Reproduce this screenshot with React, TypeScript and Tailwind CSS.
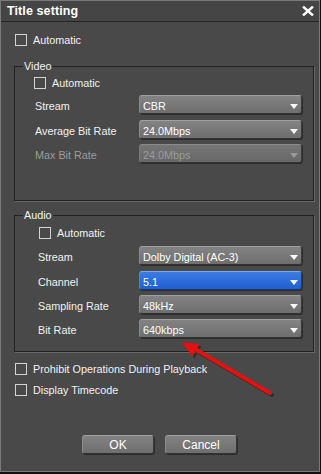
import clsx from "clsx";

type SelectProps = {
  value: string;
  variant?: "normal" | "disabled" | "active";
};

const Select = ({ value, variant = "normal" }: SelectProps) => {
  return (
    <div
      className={clsx(
        "flex h-[19px] w-[163px] items-center justify-between rounded-[3px] border pl-[3px] pr-[3px] pt-[2px] shadow-[1px_1px_0_#2c2c2c]",
        variant === "normal" &&
          "border-t-[#a0a0a0] border-l-[#8c8c8c] border-r-[#3a3a3a] border-b-[#333] bg-linear-to-b from-[#838383] to-[#6e6e6e] text-white",
        variant === "disabled" &&
          "border-t-[#8a8a8a] border-l-[#7c7c7c] border-r-[#3a3a3a] border-b-[#333] bg-linear-to-b from-[#757575] to-[#686868] text-[#9c9c9c]",
        variant === "active" &&
          "border-t-[#7ea8ec] border-l-[#4e84dc] border-r-[#1a3f7e] border-b-[#163670] bg-linear-to-b from-[#3a7ce4] to-[#1f5fcf] text-white"
      )}
    >
      <span className="leading-[14px]">{value}</span>
      <svg width="8" height="5" viewBox="0 0 8 5" className="mt-[1px]">
        <path d="M0 0H8L4 5Z" fill={variant === "disabled" ? "#999" : "#fff"} />
      </svg>
    </div>
  );
};

const Checkbox = ({ label, className }: { label: string; className?: string }) => (
  <div className={clsx("flex h-[12px] items-center", className)}>
    <div className="h-[12px] w-[12px] border border-[#d4d4d4]" />
    <span className="ml-[6px] leading-[14px] text-[#f2f2f2]">{label}</span>
  </div>
);

const Row = ({
  label,
  value,
  labelWidth,
  variant,
  className,
}: {
  label: string;
  value: string;
  labelWidth: string;
  variant?: "normal" | "disabled" | "active";
  className?: string;
}) => (
  <div className={clsx("flex items-center", className)}>
    <span
      className={clsx(
        "pt-[2px] leading-[14px]",
        labelWidth,
        variant === "disabled" ? "text-[#9c9c9c]" : "text-[#f2f2f2]"
      )}
    >
      {label}
    </span>
    <Select value={value} variant={variant} />
  </div>
);

export default function App() {
  return (
    <div className="relative h-[474px] w-[321px] bg-[#101010] font-['Liberation_Sans',Arial,sans-serif] text-[10.8px]">
      <div className="flex h-[472px] w-[320px] flex-col border border-[#7a7a7a] bg-[#494949]">
        {/* title bar */}
        <div className="flex h-[21px] shrink-0 items-center justify-between border-b border-[#252525] bg-[#454545] pl-[6px] pr-[5px]">
          <span className="text-[12.5px] font-bold tracking-[0.1px] text-white">Title setting</span>
          <svg width="12" height="10" viewBox="0 0 12 10">
            <path d="M1 0.5L11 9.5M11 0.5L1 9.5" stroke="#fff" strokeWidth="2.4" />
          </svg>
        </div>

        <div className="flex flex-col pl-[13px]">
          <Checkbox label="Automatic" className="ml-[1px] mt-[12px]" />

          {/* Video */}
          <fieldset className="mt-[13px] h-[142px] w-[300px] border border-[#222] shadow-[1px_1px_0_#6a6a6a]">
            <legend className="ml-[8px] px-[1px] leading-[14px] text-[#f2f2f2]">Video</legend>
            <Checkbox label="Automatic" className="ml-[19px] mt-[4px]" />
            <Row label="Stream" value="CBR" labelWidth="w-[104px]" className="ml-[20px] mt-[6px]" />
            <Row label="Average Bit Rate" value="24.0Mbps" labelWidth="w-[104px]" className="ml-[20px] mt-[6px]" />
            <Row
              label="Max Bit Rate"
              value="24.0Mbps"
              labelWidth="w-[104px]"
              variant="disabled"
              className="ml-[20px] mt-[5px]"
            />
          </fieldset>

          {/* Audio */}
          <fieldset className="mt-[7px] h-[144px] w-[300px] border border-[#222] shadow-[1px_1px_0_#6a6a6a]">
            <legend className="ml-[8px] px-[1px] leading-[14px] text-[#f2f2f2]">Audio</legend>
            <Checkbox label="Automatic" className="ml-[24px] mt-[5px]" />
            <Row label="Stream" value="Dolby Digital (AC-3)" labelWidth="w-[101px]" className="ml-[23px] mt-[7px]" />
            <Row label="Channel" value="5.1" labelWidth="w-[101px]" variant="active" className="ml-[23px] mt-[6px]" />
            <Row label="Sampling Rate" value="48kHz" labelWidth="w-[101px]" className="ml-[23px] mt-[5px]" />
            <Row label="Bit Rate" value="640kbps" labelWidth="w-[101px]" className="ml-[23px] mt-[5px]" />
          </fieldset>

          <Checkbox label="Prohibit Operations During Playback" className="ml-[1px] mt-[11px]" />
          <Checkbox label="Display Timecode" className="ml-[1px] mt-[9px]" />
        </div>

        <div className="mt-[39px] flex justify-center gap-[11px] pr-[1px]">
          {["OK", "Cancel"].map((b) => (
            <div
              key={b}
              className="flex h-[19px] w-[72px] items-center justify-center rounded-[3px] border border-t-[#a0a0a0] border-l-[#8c8c8c] border-r-[#3a3a3a] border-b-[#333] bg-linear-to-b from-[#838383] to-[#6e6e6e] pt-[1px] text-[12px] text-white shadow-[1px_1px_0_#2c2c2c]"
            >
              {b}
            </div>
          ))}
        </div>
      </div>

      {/* annotation arrow */}
      <svg className="pointer-events-none absolute left-0 top-0" width="321" height="474" viewBox="0 0 321 474">
        <g transform="translate(2,2)" opacity="0.35">
          <path d="M270 393L195 349" stroke="#000" strokeWidth="4" strokeLinecap="round" />
          <path d="M182 342L192.5 356.5L199.5 344Z" fill="#000" />
        </g>
        <path d="M270 393L195 349" stroke="#e51010" strokeWidth="4" strokeLinecap="round" />
        <path d="M182 342L192.5 356.5L199.5 344Z" fill="#e51010" />
      </svg>
    </div>
  );
}
